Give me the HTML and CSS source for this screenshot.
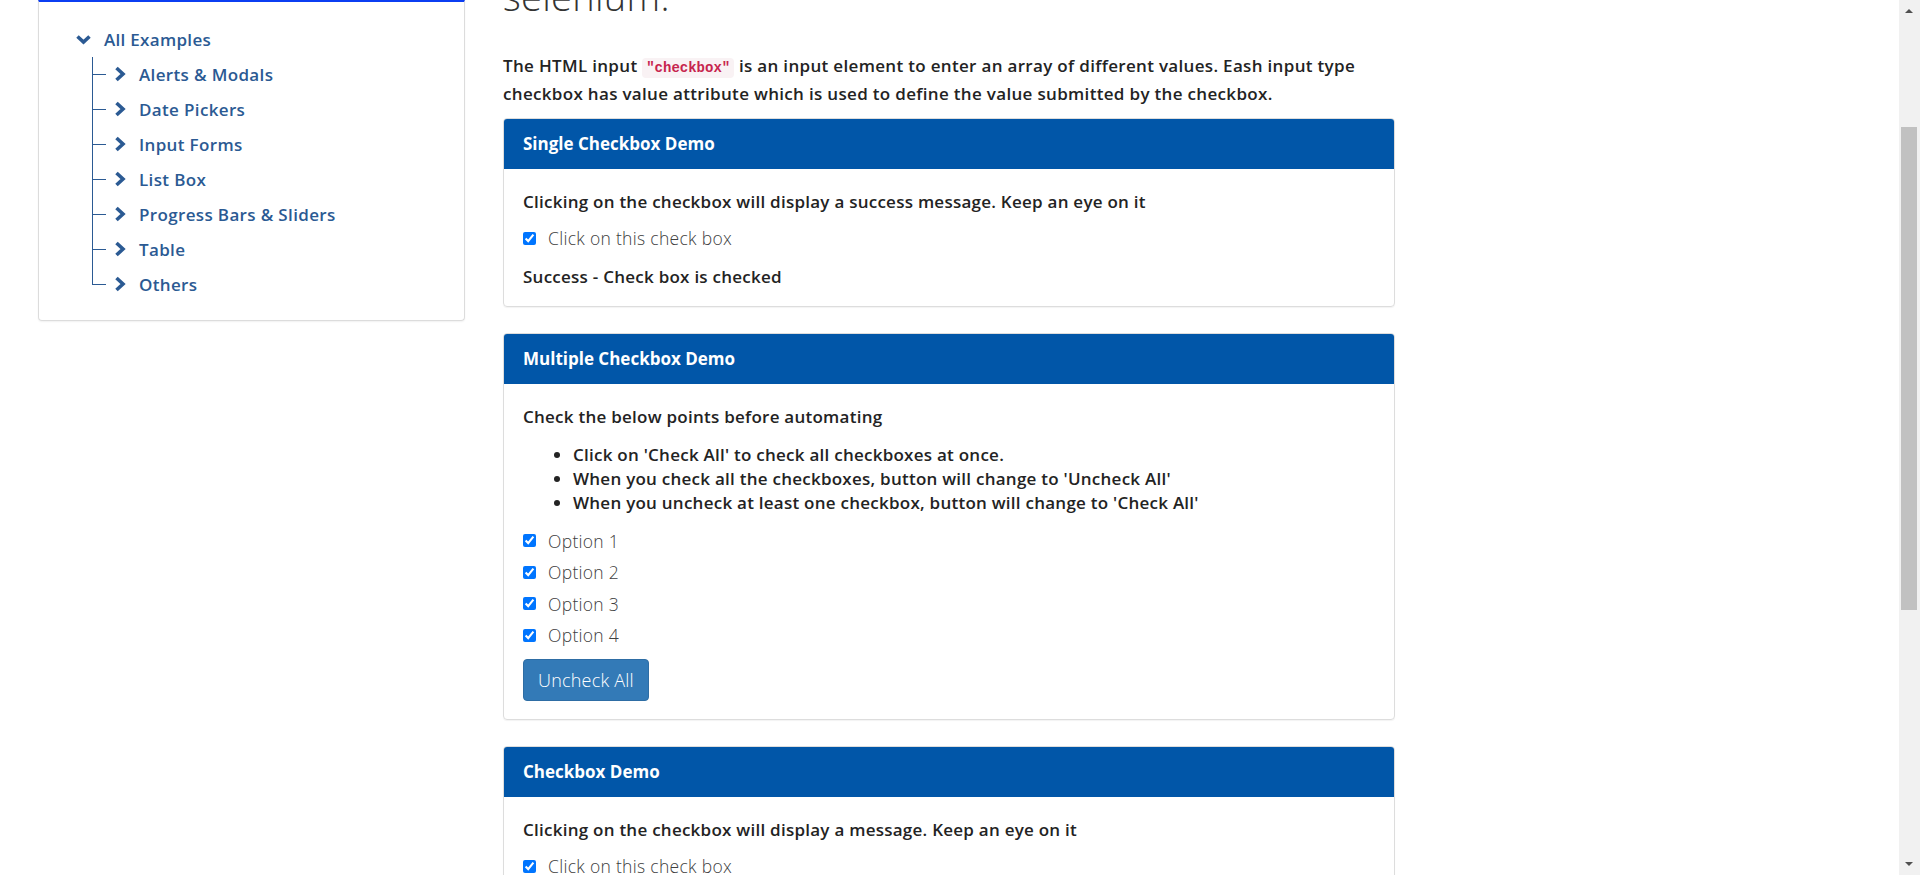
FILE: index.html
```html
<!DOCTYPE html>
<html lang="en">
<head>
<meta charset="utf-8">
<title>Checkbox Demo</title>
<link rel="stylesheet" href="styles.css">
</head>
<body>
<div class="page">
  <aside class="sidebar">
    <div class="side-card">
      <div class="tree-root">
        <svg class="chev-down" viewBox="0 0 17 11" width="17" height="11"><polyline points="2.5,2.5 8.5,8 14.5,2.5" fill="none" stroke="#2b5a93" stroke-width="3.6"/></svg>
        <span>All Examples</span>
      </div>
      <ul class="tree">
        <li><svg class="chev" viewBox="0 0 12 16" width="12" height="16"><polyline points="2.5,2 9,8 2.5,14" fill="none" stroke="#2b5a93" stroke-width="3.6"/></svg><a href="#">Alerts &amp; Modals</a></li>
        <li><svg class="chev" viewBox="0 0 12 16" width="12" height="16"><polyline points="2.5,2 9,8 2.5,14" fill="none" stroke="#2b5a93" stroke-width="3.6"/></svg><a href="#">Date Pickers</a></li>
        <li><svg class="chev" viewBox="0 0 12 16" width="12" height="16"><polyline points="2.5,2 9,8 2.5,14" fill="none" stroke="#2b5a93" stroke-width="3.6"/></svg><a href="#">Input Forms</a></li>
        <li><svg class="chev" viewBox="0 0 12 16" width="12" height="16"><polyline points="2.5,2 9,8 2.5,14" fill="none" stroke="#2b5a93" stroke-width="3.6"/></svg><a href="#">List Box</a></li>
        <li><svg class="chev" viewBox="0 0 12 16" width="12" height="16"><polyline points="2.5,2 9,8 2.5,14" fill="none" stroke="#2b5a93" stroke-width="3.6"/></svg><a href="#">Progress Bars &amp; Sliders</a></li>
        <li><svg class="chev" viewBox="0 0 12 16" width="12" height="16"><polyline points="2.5,2 9,8 2.5,14" fill="none" stroke="#2b5a93" stroke-width="3.6"/></svg><a href="#">Table</a></li>
        <li><svg class="chev" viewBox="0 0 12 16" width="12" height="16"><polyline points="2.5,2 9,8 2.5,14" fill="none" stroke="#2b5a93" stroke-width="3.6"/></svg><a href="#">Others</a></li>
      </ul>
    </div>
  </aside>

  <main class="main">
    <h1 class="page-title">selenium.</h1>
    <p class="intro">The HTML input <code>"checkbox"</code> is an input element to enter an array of different values. Eash input type<br>checkbox has value attribute which is used to define the value submitted by the checkbox.</p>

    <section class="panel">
      <div class="panel-heading">Single Checkbox Demo</div>
      <div class="panel-body">
        <p class="line">Clicking on the checkbox will display a success message. Keep an eye on it</p>
        <label class="check-row"><input type="checkbox" checked><span>Click on this check box</span></label>
        <p class="line result">Success - Check box is checked</p>
      </div>
    </section>

    <section class="panel">
      <div class="panel-heading">Multiple Checkbox Demo</div>
      <div class="panel-body">
        <p class="line">Check the below points before automating</p>
        <ul class="points">
          <li>Click on 'Check All' to check all checkboxes at once.</li>
          <li>When you check all the checkboxes, button will change to 'Uncheck All'</li>
          <li>When you uncheck at least one checkbox, button will change to 'Check All'</li>
        </ul>
        <label class="check-row opt"><input type="checkbox" checked><span>Option 1</span></label>
        <label class="check-row opt"><input type="checkbox" checked><span>Option 2</span></label>
        <label class="check-row opt"><input type="checkbox" checked><span>Option 3</span></label>
        <label class="check-row opt"><input type="checkbox" checked><span>Option 4</span></label>
        <button class="btn" type="button">Uncheck All</button>
      </div>
    </section>

    <section class="panel">
      <div class="panel-heading">Checkbox Demo</div>
      <div class="panel-body">
        <p class="line">Clicking on the checkbox will display a message. Keep an eye on it</p>
        <label class="check-row"><input type="checkbox" checked><span>Click on this check box</span></label>
      </div>
    </section>
  </main>
</div>

<div class="scrollbar">
  <div class="sb-arrow up"></div>
  <div class="sb-thumb"></div>
  <div class="sb-arrow down"></div>
</div>
</body>
</html>
```

FILE: styles.css
```css
html, body {
  margin: 0;
  padding: 0;
  height: 875px;
  overflow: hidden;
  background: #fff;
}

body {
  font-family: "Open Sans", "Noto Sans", sans-serif;
  font-weight: 600;
  font-size: 17px;
  letter-spacing: 0.25px;
  color: #232323;
}

.page {
  display: flex;
  gap: 38px;
  padding-left: 38px;
  width: 1899px;
  box-sizing: border-box;
  height: 875px;
  overflow: hidden;
}

/* Sidebar */
.sidebar {
  width: 427px;
  flex: none;
}

.side-card {
  border: 1px solid #dcdcdc;
  border-top: 2px solid #0b3df2;
  border-radius: 0 0 4px 4px;
  box-shadow: 0 1px 2px rgba(0, 0, 0, 0.06);
  padding: 19.5px 0 18px 36px;
  color: #2b5a93;
}

.tree-root {
  display: flex;
  align-items: center;
  gap: 12px;
  height: 35px;
  font-size: 17px;
  letter-spacing: 0.3px;
}

.tree {
  list-style: none;
  margin: 0 0 0 17px;
  padding: 0;
}

.tree li {
  position: relative;
  display: flex;
  align-items: center;
  gap: 13px;
  height: 35px;
  padding-left: 22px;
  font-size: 17px;
  letter-spacing: 0.35px;
}

.tree li::before {
  content: "";
  position: absolute;
  left: 0;
  top: 0;
  width: 13px;
  height: 17px;
  border-left: 1px solid #2b5a93;
  border-bottom: 1px solid #2b5a93;
}

.tree li::after {
  content: "";
  position: absolute;
  left: 0;
  top: 17px;
  bottom: 0;
  border-left: 1px solid #2b5a93;
}

.tree li:last-child::after {
  display: none;
}

.tree a {
  color: #2b5a93;
  text-decoration: none;
}

.chev, .chev-down {
  flex: none;
  display: block;
}

/* Main */
.main {
  width: 892px;
  flex: none;
}

.page-title {
  font-size: 38px;
  font-weight: 300;
  letter-spacing: 0.3px;
  line-height: 40px;
  margin: -24px 0 0;
  color: #333;
}

.intro {
  line-height: 25px;
  margin: 37px 0 11.5px;
  letter-spacing: 0.32px;
}

code {
  font-family: "Liberation Mono", monospace;
  font-weight: 700;
  font-size: 14px;
  letter-spacing: 0;
  color: #c7254e;
  background: #f9f2f4;
  padding: 2px 4px;
  border-radius: 4px;
}

.panel {
  border: 1px solid #dddddd;
  border-radius: 4px;
  overflow: hidden;
  margin-bottom: 26px;
  box-shadow: 0 1px 1px rgba(0, 0, 0, 0.05);
}

.panel-heading {
  background: #0156a8;
  color: #fff;
  height: 50px;
  display: flex;
  align-items: center;
  padding: 0 19px;
  font-weight: 700;
  font-size: 17px;
  letter-spacing: 0;
}

.panel-body {
  padding: 20px 19px 17px;
}

.line {
  margin: 0 0 12px;
  line-height: 25px;
}

.result {
  margin: 13px 0 0;
}

.check-row {
  display: flex;
  align-items: center;
  gap: 12px;
  height: 25px;
  font-weight: 300;
  font-size: 17.5px;
  letter-spacing: 0.3px;
  color: #404040;
}

.check-row input {
  margin: 0;
  width: 13px;
  height: 13px;
}

.points {
  margin: 14px 0 13.5px;
  padding-left: 50px;
  line-height: 24px;
}

.opt {
  margin-bottom: 6.5px;
}

.btn {
  display: block;
  margin: 11px 0 1px;
  height: 42px;
  padding: 0 14px;
  font-family: "Open Sans", sans-serif;
  font-size: 18px;
  font-weight: 300;
  letter-spacing: 0.2px;
  color: #fff;
  background: #337ab7;
  border: 1px solid #2e6da4;
  border-radius: 4px;
}

/* Fake scrollbar (page is shown scrolled) */
.scrollbar {
  position: fixed;
  top: 0;
  right: 0;
  width: 21px;
  height: 875px;
  background: #f1f1f1;
}

.sb-thumb {
  position: absolute;
  left: 2px;
  right: 3px;
  top: 127px;
  height: 483px;
  background: #c1c1c1;
}

.sb-arrow {
  position: absolute;
  left: 6px;
  width: 0;
  height: 0;
  border-left: 4px solid transparent;
  border-right: 4px solid transparent;
}

.sb-arrow.up {
  top: 9px;
  border-bottom: 4px solid #505050;
}

.sb-arrow.down {
  bottom: 9px;
  border-top: 4px solid #505050;
}
```
